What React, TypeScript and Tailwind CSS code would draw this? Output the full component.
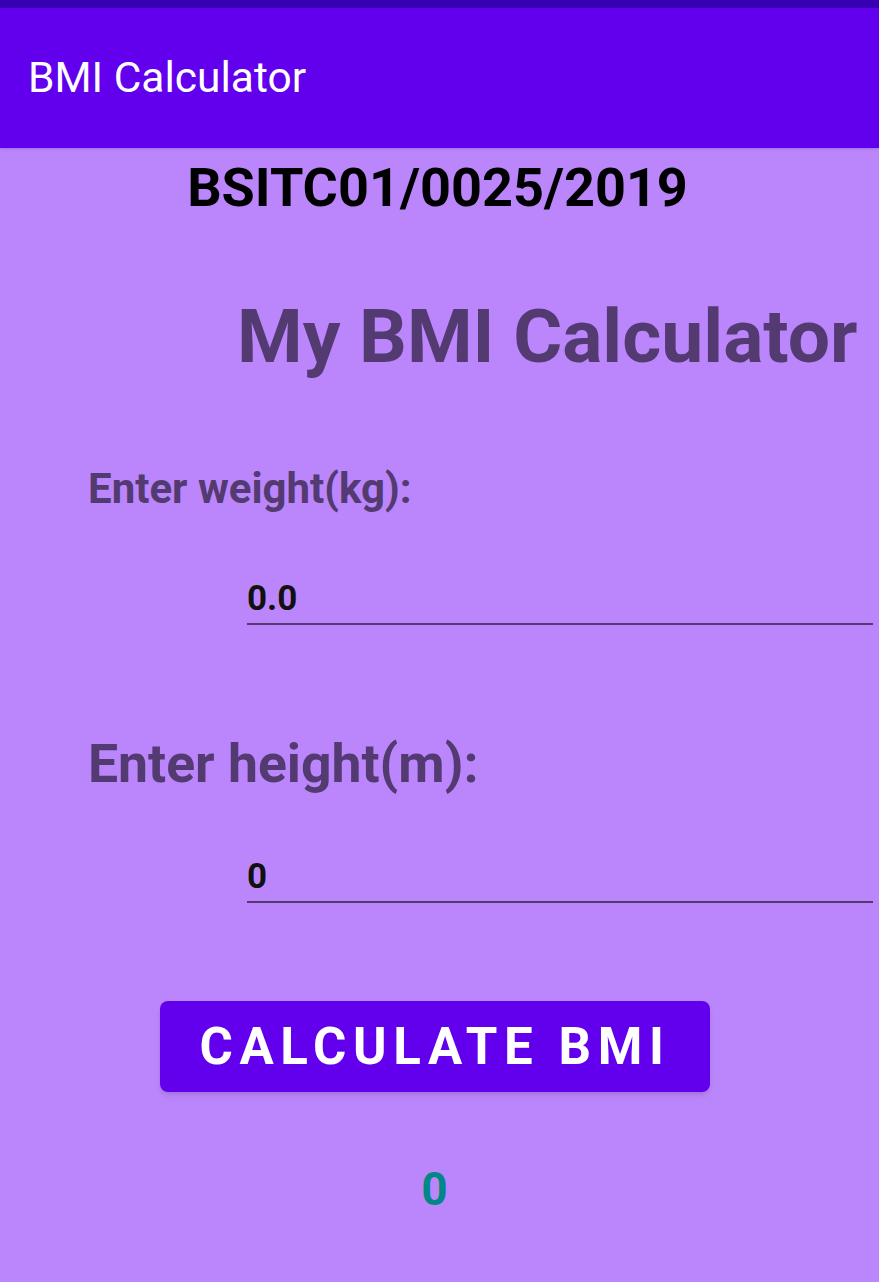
export default function App() {
  return (
    <div className="min-h-screen w-full bg-[#BB86FC] font-['Roboto',sans-serif]">
      <div className="h-[8px] bg-[#3700B3]" />
      <div className="h-[140px] bg-[#6200EE] flex items-center pl-[28px] shadow-sm">
        <h1 className="text-[42.5px] leading-none text-white font-normal">BMI Calculator</h1>
      </div>

      <div className="mt-[13px] text-center pr-[4px] text-[54px] leading-none font-bold text-black">
        BSITC01/0025/2019
      </div>

      <div className="mt-[84px] pl-[237px] text-[75px] leading-none font-bold text-[#533A71]">
        My BMI Calculator
      </div>

      <div className="mt-[94px] pl-[88px] text-[42px] leading-none font-bold text-[#533A71]">
        Enter weight(kg):
      </div>
      <div className="mt-[68px] ml-[247px] mr-[6px] border-b-2 border-[#533A71] pb-[4px]">
        <input
          className="w-full bg-transparent outline-none text-[35px] leading-none font-bold text-[#111]"
          defaultValue="0.0"
        />
      </div>

      <div className="mt-[112px] pl-[88px] text-[53.5px] leading-none font-bold text-[#533A71]">
        Enter height(m):
      </div>
      <div className="mt-[65px] ml-[247px] mr-[6px] border-b-2 border-[#533A71] pb-[4px]">
        <input
          className="w-full bg-transparent outline-none text-[35px] leading-none font-bold text-[#111]"
          defaultValue="0"
        />
      </div>

      <div className="mt-[98px] pl-[160px]">
        <button className="w-[550px] h-[91px] rounded-[8px] bg-[#6200EE] text-white font-bold text-[51px] leading-none tracking-[0.13em] shadow-md">
          CALCULATE BMI
        </button>
      </div>

      <div className="mt-[74px] text-center pr-[10px] text-[46px] leading-none font-bold text-[#018786]">
        0
      </div>
    </div>
  );
}
